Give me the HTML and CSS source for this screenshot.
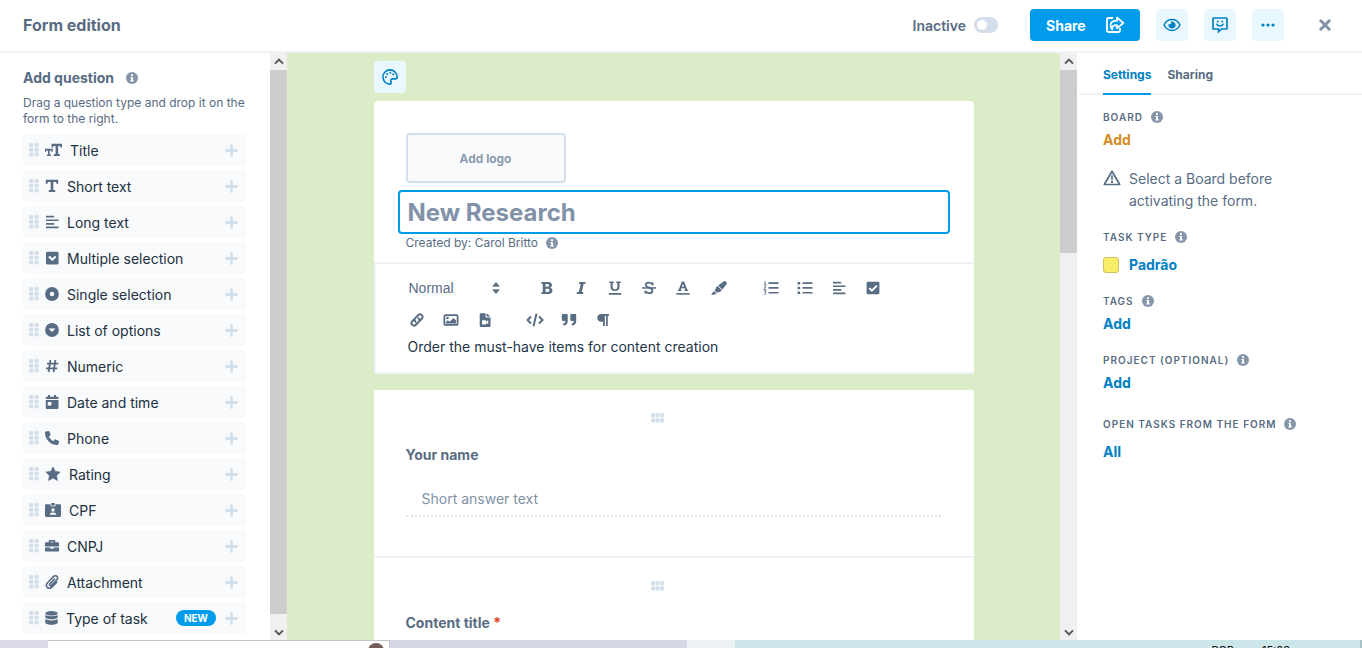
FILE: index.html
```html
<!DOCTYPE html>
<html lang="en">
<head>
    <meta charset="UTF-8">
    <meta name="viewport" content="width=device-width, initial-scale=1.0">
    <title>Form edition</title>
    <link rel="stylesheet" href="styles.css">
</head>
<body>
    <svg class="sprite" aria-hidden="true">
        <symbol id="info" viewBox="0 0 12 12">
            <circle cx="6" cy="6" r="6"/>
            <path fill="#fff" d="M5 2.2h2v1.8H5zM4.4 4.9H7v3.4h.8v1.2H4.3V8.3h.8V6.1h-.7z"/>
        </symbol>
        <symbol id="drag" viewBox="0 0 10 14">
            <rect x="0" y="0" width="4.4" height="4" rx="1.4"/><rect x="5.4" y="0" width="4.4" height="4" rx="1.4"/>
            <rect x="0" y="4.7" width="4.4" height="4" rx="1.4"/><rect x="5.4" y="4.7" width="4.4" height="4" rx="1.4"/>
            <rect x="0" y="9.4" width="4.4" height="4" rx="1.4"/><rect x="5.4" y="9.4" width="4.4" height="4" rx="1.4"/>
        </symbol>
        <symbol id="drag-wide" viewBox="0 0 13 10">
            <rect x="0" y="0" width="4" height="4.4" rx="1.4"/><rect x="4.5" y="0" width="4" height="4.4" rx="1.4"/><rect x="9" y="0" width="4" height="4.4" rx="1.4"/>
            <rect x="0" y="5.2" width="4" height="4.4" rx="1.4"/><rect x="4.5" y="5.2" width="4" height="4.4" rx="1.4"/><rect x="9" y="5.2" width="4" height="4.4" rx="1.4"/>
        </symbol>
        <symbol id="plus" viewBox="0 0 13 13">
            <path d="M6.5 1.4v10.2M1.4 6.5h10.2" stroke="currentColor" stroke-width="2.8" stroke-linecap="round"/>
        </symbol>
        <symbol id="title" viewBox="0 0 18 14">
            <path d="M7 .5h11v3.8h-1.7l-.3-1.6h-2.1v8.6h1.7v2H9.4v-2h1.8V2.700H9l-.3 1.600H7z"/>
            <path d="M0 5.600h8.200v3.200H6.800l-.3-1.300H5v4.300h1.200v1.500H2v-1.500h1.200V7.500H1.700l-.3 1.300H0z"/>
        </symbol>
        <symbol id="text" viewBox="0 0 14 14">
            <path d="M.8.8h12.4v4h-1.8l-.3-1.9H8.300v8.200h1.900v2H3.800v-2h1.900V2.900H2.900l-.3 1.900H.8z"/>
        </symbol>
        <symbol id="lines" viewBox="0 0 14 14">
            <path d="M1 .8h8.200v1.700H1zM1 4.400h12.500v1.700H1zM1 8h8.200v1.700H1zM1 11.600h12.500v1.700H1z"/>
        </symbol>
        <symbol id="multiple" viewBox="0 0 14 14">
            <rect x="1" y=".8" width="12.6" height="12.6" rx="1.4"/>
            <path d="M4 5.500l3.300 3.200 3.300-3.200" fill="none" stroke="#fff" stroke-width="2"/>
        </symbol>
        <symbol id="single" viewBox="0 0 14 14">
            <circle cx="7" cy="7" r="6.9"/><circle cx="7" cy="7" r="2.2" fill="#fff"/>
        </symbol>
        <symbol id="options" viewBox="0 0 14 14">
            <circle cx="7" cy="7" r="6.9"/><path fill="#fff" d="M3.600 5.500h6.800L7 9.100z"/>
        </symbol>
        <symbol id="hash" viewBox="0 0 14 14">
            <path d="M5.400 1L3.600 13M10.400 1L8.600 13M2 4.600h11.200M1 9.400h11.200" fill="none" stroke="currentColor" stroke-width="1.8"/>
        </symbol>
        <symbol id="calendar" viewBox="0 0 14 14">
            <path d="M3 0h2v1.800h4V0h2v1.800h1.200c.8 0 1.300.5 1.300 1.300v1H.8v-1c0-.8.5-1.300 1.300-1.300H3z"/>
            <path d="M.8 5.100h12.700v7.600c0 .8-.5 1.300-1.300 1.300H2.100c-.8 0-1.300-.5-1.300-1.300z"/>
            <rect x="2.7" y="6.9" width="3.7" height="3.6" rx=".4" fill="#fff"/>
        </symbol>
        <symbol id="phone" viewBox="0 0 14 14">
            <path d="M.7.6L3.500 0c.3-.1.6.1.8.4l1.300 3c.1.3 0 .6-.2.8L3.800 5.500c.9 2 2.600 3.700 4.700 4.700l1.300-1.600c.2-.3.5-.3.8-.2l3 1.300c.3.100.5.400.4.800l-.6 2.800c-.1.400-.4.700-.8.700C5.600 14 0 8.500 0 1.400c0-.4.300-.7.700-.8z"/>
        </symbol>
        <symbol id="star" viewBox="0 0 16 14">
            <path d="M8 0l2.200 4.400 4.900.7-3.500 3.400.8 4.900L8 11.100l-4.400 2.300.8-4.900L.9 5.100l4.900-.7z" stroke="currentColor" stroke-width=".7" stroke-linejoin="round"/>
        </symbol>
        <symbol id="badge" viewBox="0 0 16 14">
            <path d="M1.200 1.300H5.500V3.300h5V1.300h4.300c.7 0 1.200.5 1.200 1.200v10.300c0 .7-.5 1.200-1.200 1.200H1.200C.5 14 0 13.500 0 12.800V2.500c0-.7.5-1.200 1.200-1.200z"/>
            <rect x="6.2" y="0" width="3.6" height="2.6" rx=".5"/>
            <circle cx="8" cy="7" r="1.7" fill="#fff"/><path fill="#fff" d="M4.900 11.800c0-1.700 1-2.400 3.100-2.400s3.100.7 3.100 2.400z"/>
        </symbol>
        <symbol id="briefcase" viewBox="0 0 15 14">
            <path fill-rule="evenodd" d="M4 3V1.700C4 1 4.500.5 5.200.5h4.600c.7 0 1.200.5 1.200 1.200V3h2.700c.7 0 1.300.6 1.300 1.300v3.300H0V4.300C0 3.600.6 3 1.300 3zm1.700 0h3.600V2.100H5.700z"/>
            <path d="M0 8.500h5.700v1.400h3.600V8.500H15v3.200c0 .7-.6 1.300-1.300 1.300H1.300C.6 13 0 12.400 0 11.700z"/>
        </symbol>
        <symbol id="clip" viewBox="0 0 14 14">
            <path d="M9.500 4L4.900 8.900c-1 1.100.5 2.600 1.600 1.500l5.300-5.600c2.200-2.500-1-5.500-3.400-3.200L2.500 7.700c-3.200 3.500 1.300 7.500 4.400 4.400l4.800-5" fill="none" stroke="currentColor" stroke-width="1.6" stroke-linecap="round"/>
        </symbol>
        <symbol id="database" viewBox="0 0 13 14">
            <ellipse cx="6.5" cy="2.3" rx="6.2" ry="2.3"/>
            <path d="M.3 4.100c2.400 1.600 10 1.600 12.400 0v2.300c-1.200 2.400-11.200 2.400-12.400 0z"/>
            <path d="M.3 8.100c2.400 1.700 10 1.700 12.400 0v3.600c-1.200 2.800-11.200 2.800-12.400 0z"/>
        </symbol>
        <symbol id="share" viewBox="0 0 20 18">
            <path d="M8 2H3.500C2.400 2 2 2.500 2 3.500v11c0 1 .5 1.500 1.500 1.500h10c1 0 1.500-.5 1.500-1.500V12" fill="none" stroke="currentColor" stroke-width="1.8"/>
            <path d="M12 1.500L18.300 7 12 12.300V9.200c-4 0-4.900 1-4.800 4.300C3.800 8.300 6 4.800 12 4.700z" fill="none" stroke="currentColor" stroke-width="1.7" stroke-linejoin="round"/>
        </symbol>
        <symbol id="eye" viewBox="0 0 18 14">
            <path d="M1 7c3.500-7.200 12.500-7.200 16 0-3.500 7.200-12.500 7.200-16 0z" fill="none" stroke="currentColor" stroke-width="1.5"/>
            <path d="M9 3.400c2.100 0 3.600 1.600 3.600 3.600S11.100 10.600 9 10.600 5.400 9 5.400 7c0-.4.1-.8.200-1.100 1.200 1 3.100.2 2.500-1.400-.1-.4-.3-.6-.4-.8.4-.2.800-.3 1.300-.3z"/>
        </symbol>
        <symbol id="comment" viewBox="0 0 16 16">
            <path d="M1.800 1h12.400c.5 0 .8.300.8.800v9.400c0 .5-.3.800-.8.800H9.500l-3 2.800V12H1.800c-.5 0-.8-.3-.8-.8V1.800c0-.5.3-.8.800-.8z" fill="none" stroke="currentColor" stroke-width="1.7"/>
            <path d="M4.800 7.200c1.400 2.400 5 2.400 6.400 0" fill="none" stroke="currentColor" stroke-width="1.5" stroke-linecap="round"/>
            <circle cx="5.8" cy="4.600" r="1"/><circle cx="10.2" cy="4.600" r="1"/>
        </symbol>
        <symbol id="dots" viewBox="0 0 14 4">
            <circle cx="2" cy="2" r="1.6"/><circle cx="7" cy="2" r="1.6"/><circle cx="12" cy="2" r="1.6"/>
        </symbol>
        <symbol id="close" viewBox="0 0 12 12">
            <path d="M1.800 1.800l8.400 8.400M10.200 1.800l-8.400 8.400" stroke="currentColor" stroke-width="3" stroke-linecap="round"/>
        </symbol>
        <symbol id="palette" viewBox="0 0 16 16">
            <path d="M8 .9C4.100.9.9 4.100.9 8c0 3.800 3 7.100 6.800 7.100 1.400 0 1.900-1.200 1.300-2.500-.7-1.600.2-2.700 1.800-2.700h2.500c1.200 0 1.800-.7 1.800-1.900C15.100 4 12 .9 8 .9z" fill="none" stroke="currentColor" stroke-width="1.6"/>
            <circle cx="4" cy="8" r="1"/><circle cx="5.2" cy="4.900" r="1"/><circle cx="8.3" cy="3.800" r="1"/><circle cx="11.3" cy="5.200" r="1"/>
        </symbol>
        <symbol id="up" viewBox="0 0 10 7">
            <path d="M1 5.600l4-4 4 4" fill="none" stroke="currentColor" stroke-width="2"/>
        </symbol>
        <symbol id="down" viewBox="0 0 10 7">
            <path d="M1 1.400l4 4 4-4" fill="none" stroke="currentColor" stroke-width="2"/>
        </symbol>
        <symbol id="sort" viewBox="0 0 8 12">
            <path d="M4 .6l3.300 3.600H.7zM4 11.400L.7 7.800h6.600z" stroke="currentColor" stroke-width=".8" stroke-linejoin="round"/>
        </symbol>
        <symbol id="bold" viewBox="0 0 14 14">
            <path fill-rule="evenodd" d="M1.500 1h6.800c2.300 0 3.600 1.100 3.600 3 0 1.300-.6 2.200-1.700 2.700 1.500.4 2.200 1.400 2.200 2.800 0 2.300-1.500 3.500-4 3.500H1.500v-2h1.300V3H1.500zM5.500 3v2.800h2c1 0 1.600-.5 1.600-1.400S8.500 3 7.500 3zm0 4.700V11h2.300c1.100 0 1.700-.6 1.700-1.700 0-1-.6-1.600-1.700-1.600z"/>
        </symbol>
        <symbol id="italic" viewBox="0 0 14 14">
            <path d="M5.300 1h6.300l-.3 1.900H9.600L7.700 11.100h1.700L9 13H2.600L3 11.100h1.800L6.700 2.900H5z"/>
        </symbol>
        <symbol id="underline" viewBox="0 0 14 14">
            <path d="M1.200.4h4.600V2H4.700v4c0 1.600.8 2.300 2.300 2.300S9.300 7.600 9.300 6V2H8.200V.4h4.600V2h-1.300v4.100C11.500 8.700 9.800 10.100 7 10.100S2.500 8.700 2.500 6.100V2H1.200zM.8 12.100h12.400v1.600H.8z"/>
        </symbol>
        <symbol id="strike" viewBox="0 0 14 14">
            <path d="M10.600 4.200V1.400M10.600 3.600C9 .6 3.700 1 3.800 4c.1 1.600 1.700 2.200 3.300 2.700s3.400 1.100 3.300 2.900c-.1 3.300-5.500 3.300-7 .4M3.400 9.700v2.800" fill="none" stroke="currentColor" stroke-width="1.8"/>
            <path d="M0 6.200h14v1.500H0z"/>
        </symbol>
        <symbol id="color" viewBox="0 0 14 14">
            <path fill-rule="evenodd" d="M5.900.4h2.200l3.200 8.300h.8v1.400H8.500V8.700h.7l-.5-1.500H5.300l-.5 1.500h.7v1.400H1.900V8.700h.8zM7 2.700L5.900 5.700h2.200z"/>
            <path d="M.3 12.100h13.400v1.600H.3z"/>
        </symbol>
        <symbol id="marker" viewBox="0 0 16 14">
            <path d="M12.600.4c.8-.5 1.400-.5 2 .1l.9.900c.5.600.5 1.200.1 1.900l-4.300 5.200-4.100-4zM6.600 5.100l4.100 4-1.100 1.300c-.6.600-1.300.7-2 .5L6.300 12l-2.900-2.800 1.300-1.200c-.2-.7 0-1.300.5-1.800zM2.800 9.900l2.700 2.700-1.100 1-.8-.8-.5.900H0z"/>
        </symbol>
        <symbol id="ol" viewBox="0 0 16 14">
            <path d="M5.500 1.300h10v1.700h-10zM5.500 6.100h10v1.700h-10zM5.500 10.900h10v1.700h-10z"/>
            <path d="M1 1h1.200v3M.8 4h2.800M.9 5.900h2L.9 8.600h2.500M.8 10h2.300l-1 1.400c1.800.2 1.200 2.100-1.300 1.700" fill="none" stroke="currentColor" stroke-width=".9"/>
        </symbol>
        <symbol id="ul" viewBox="0 0 16 14">
            <path d="M5.500 1.300h10v1.700h-10zM5.500 6.100h10v1.700h-10zM5.500 10.900h10v1.700h-10zM.6 1h2.600v2.400H.6zM.6 5.800h2.600v2.400H.6zM.6 10.600h2.600v2.400H.6z"/>
        </symbol>
        <symbol id="check" viewBox="0 0 14 14">
            <rect x=".6" y=".7" width="12.8" height="12.6" rx="1.4"/>
            <path d="M3.300 7.100l2.600 2.600 5-5" fill="none" stroke="#fff" stroke-width="1.9"/>
        </symbol>
        <symbol id="link" viewBox="0 0 14 14">
            <path d="M5.600 8.700C4.300 7.400 4.400 5.900 5.400 4.900l2.700-2.700c2.400-2.300 6 .9 3.700 3.500l-1.500 1.500M8.400 5.300c1.300 1.300 1.200 2.800.2 3.800l-2.700 2.700c-2.400 2.300-6-.9-3.700-3.500l1.500-1.500" fill="none" stroke="currentColor" stroke-width="2" stroke-linecap="round"/>
        </symbol>
        <symbol id="image" viewBox="0 0 16 14">
            <rect x="1.4" y="2.1" width="13.2" height="9.8" rx="1" fill="none" stroke="currentColor" stroke-width="1.8"/>
            <circle cx="4.5" cy="5" r="1.3"/><path d="M3 10.400V9l1.900-1.800 1.600 1.500L10.500 5l2.600 2.500v2.900z"/>
        </symbol>
        <symbol id="file" viewBox="0 0 14 14">
            <path fill-rule="evenodd" d="M2.500.2h5v3.500c0 .4.300.7.700.7H12.500v8.700c0 .5-.3.800-.8.800H2.500c-.5 0-.8-.3-.8-.8V1c0-.5.3-.8.8-.8zM4 7.200v4.200h4V10l2.200 1.300V7.200L8 8.500V7.200z"/>
            <path d="M8.500.2l4 3.300h-4z"/>
        </symbol>
        <symbol id="code" viewBox="0 0 18 14">
            <path d="M5 3.500L1.500 7 5 10.500M13 3.500L16.500 7 13 10.500M10.500.8l-3 12.400" fill="none" stroke="currentColor" stroke-width="2"/>
        </symbol>
        <symbol id="quote" viewBox="0 0 16 14">
            <path d="M2 1h3.500c.8 0 1.200.5 1.200 1.200v6c0 2.700-1.400 4.100-4.400 4.300v-2c1.500-.1 2-.8 2-2.500H2C1.200 8 .8 7.500.8 6.800V2.200C.8 1.500 1.200 1 2 1zM10.500 1H14c.8 0 1.200.5 1.200 1.200v6c0 2.700-1.400 4.100-4.400 4.300v-2c1.500-.1 2-.8 2-2.500h-2.300c-.8 0-1.200-.5-1.200-1.200V2.200c0-.7.4-1.200 1.200-1.200z"/>
        </symbol>
        <symbol id="paragraph" viewBox="0 0 14 14">
            <path d="M5.500 1H13v1.700h-1.200V13h-1.700V2.700H8.800V13H7V8.800H5.500C3 8.800 1.300 7.200 1.300 4.900S3 1 5.500 1z"/>
        </symbol>
        <symbol id="warning" viewBox="0 0 18 16">
            <path d="M9 1.300l7.700 13.200H1.300z" fill="none" stroke="currentColor" stroke-width="1.7" stroke-linejoin="round"/>
            <path d="M8 5.600h2l-.3 4.300H8.300z"/><circle cx="9" cy="11.900" r="1.2"/>
        </symbol>
    </svg>

    <header class="topbar">
        <h1>Form edition</h1>
        <div class="topbar-actions">
            <label class="status">Inactive <input type="checkbox" class="toggle"></label>
            <button class="share">Share <svg width="20" height="18"><use href="#share"/></svg></button>
            <button class="icon-button" aria-label="Preview"><svg width="18" height="14"><use href="#eye"/></svg></button>
            <button class="icon-button" aria-label="Feedback"><svg width="16" height="16"><use href="#comment"/></svg></button>
            <button class="icon-button" aria-label="More"><svg width="14" height="4"><use href="#dots"/></svg></button>
            <button class="close" aria-label="Close"><svg width="12" height="12"><use href="#close"/></svg></button>
        </div>
    </header>

    <main class="workspace">
        <aside class="questions">
            <h2>Add question <svg class="info" width="12" height="12"><use href="#info"/></svg></h2>
            <p>Drag a question type and drop it on the form to the right.</p>
            <div class="question-types">
                <button class="type"><svg class="grip" width="10" height="14"><use href="#drag"/></svg><svg width="17" height="14"><use href="#title"/></svg><span>Title</span><svg class="plus" width="13" height="13"><use href="#plus"/></svg></button>
                <button class="type"><svg class="grip" width="10" height="14"><use href="#drag"/></svg><svg width="14" height="14"><use href="#text"/></svg><span>Short text</span><svg class="plus" width="13" height="13"><use href="#plus"/></svg></button>
                <button class="type"><svg class="grip" width="10" height="14"><use href="#drag"/></svg><svg width="14" height="14"><use href="#lines"/></svg><span>Long text</span><svg class="plus" width="13" height="13"><use href="#plus"/></svg></button>
                <button class="type"><svg class="grip" width="10" height="14"><use href="#drag"/></svg><svg width="14" height="14"><use href="#multiple"/></svg><span>Multiple selection</span><svg class="plus" width="13" height="13"><use href="#plus"/></svg></button>
                <button class="type"><svg class="grip" width="10" height="14"><use href="#drag"/></svg><svg width="14" height="14"><use href="#single"/></svg><span>Single selection</span><svg class="plus" width="13" height="13"><use href="#plus"/></svg></button>
                <button class="type"><svg class="grip" width="10" height="14"><use href="#drag"/></svg><svg width="14" height="14"><use href="#options"/></svg><span>List of options</span><svg class="plus" width="13" height="13"><use href="#plus"/></svg></button>
                <button class="type"><svg class="grip" width="10" height="14"><use href="#drag"/></svg><svg width="14" height="14"><use href="#hash"/></svg><span>Numeric</span><svg class="plus" width="13" height="13"><use href="#plus"/></svg></button>
                <button class="type"><svg class="grip" width="10" height="14"><use href="#drag"/></svg><svg width="14" height="14"><use href="#calendar"/></svg><span>Date and time</span><svg class="plus" width="13" height="13"><use href="#plus"/></svg></button>
                <button class="type"><svg class="grip" width="10" height="14"><use href="#drag"/></svg><svg width="14" height="14"><use href="#phone"/></svg><span>Phone</span><svg class="plus" width="13" height="13"><use href="#plus"/></svg></button>
                <button class="type"><svg class="grip" width="10" height="14"><use href="#drag"/></svg><svg width="16" height="14"><use href="#star"/></svg><span>Rating</span><svg class="plus" width="13" height="13"><use href="#plus"/></svg></button>
                <button class="type"><svg class="grip" width="10" height="14"><use href="#drag"/></svg><svg width="16" height="14"><use href="#badge"/></svg><span>CPF</span><svg class="plus" width="13" height="13"><use href="#plus"/></svg></button>
                <button class="type"><svg class="grip" width="10" height="14"><use href="#drag"/></svg><svg width="14" height="14"><use href="#briefcase"/></svg><span>CNPJ</span><svg class="plus" width="13" height="13"><use href="#plus"/></svg></button>
                <button class="type"><svg class="grip" width="10" height="14"><use href="#drag"/></svg><svg width="14" height="14"><use href="#clip"/></svg><span>Attachment</span><svg class="plus" width="13" height="13"><use href="#plus"/></svg></button>
                <button class="type"><svg class="grip" width="10" height="14"><use href="#drag"/></svg><svg width="13" height="14"><use href="#database"/></svg><span>Type of task</span><b class="new">NEW</b><svg class="plus" width="13" height="13"><use href="#plus"/></svg></button>
            </div>
        </aside>
        <div class="scrollbar">
            <svg width="10" height="7"><use href="#up"/></svg>
            <div class="track"><div class="thumb thumb-long"></div></div>
            <svg width="10" height="7"><use href="#down"/></svg>
        </div>

        <section class="canvas">
            <div class="form">
                <button class="icon-button" aria-label="Theme"><svg width="16" height="16"><use href="#palette"/></svg></button>
                <div class="card intro">
                    <div class="intro-head">
                        <button class="logo">Add logo</button>
                        <input type="text" class="form-title" value="New Research" aria-label="Form title">
                        <p class="author">Created by: Carol Britto <svg class="info" width="12" height="12"><use href="#info"/></svg></p>
                    </div>
                    <div class="editor">
                        <div class="toolbar">
                            <label class="format">
                                <select aria-label="Text style"><option>Normal</option></select>
                                <svg width="8" height="12"><use href="#sort"/></svg>
                            </label>
                            <div class="tools">
                                <button aria-label="Bold"><svg width="14" height="14"><use href="#bold"/></svg></button>
                                <button aria-label="Italic"><svg width="14" height="14"><use href="#italic"/></svg></button>
                                <button aria-label="Underline"><svg width="14" height="14"><use href="#underline"/></svg></button>
                                <button aria-label="Strikethrough"><svg width="14" height="14"><use href="#strike"/></svg></button>
                                <button aria-label="Text color"><svg width="14" height="14"><use href="#color"/></svg></button>
                                <button class="wide" aria-label="Highlight"><svg width="16" height="14"><use href="#marker"/></svg></button>
                            </div>
                            <div class="tools">
                                <button aria-label="Numbered list"><svg width="16" height="14"><use href="#ol"/></svg></button>
                                <button aria-label="Bulleted list"><svg width="16" height="14"><use href="#ul"/></svg></button>
                                <button aria-label="Align left"><svg width="14" height="14"><use href="#lines"/></svg></button>
                                <button aria-label="Checklist"><svg width="14" height="14"><use href="#check"/></svg></button>
                            </div>
                            <div class="tools">
                                <button aria-label="Link"><svg width="14" height="14"><use href="#link"/></svg></button>
                                <button aria-label="Image"><svg width="16" height="14"><use href="#image"/></svg></button>
                                <button aria-label="Video"><svg width="14" height="14"><use href="#file"/></svg></button>
                            </div>
                            <div class="tools">
                                <button aria-label="Code"><svg width="18" height="14"><use href="#code"/></svg></button>
                                <button aria-label="Quote"><svg width="16" height="14"><use href="#quote"/></svg></button>
                                <button aria-label="Paragraph"><svg width="14" height="14"><use href="#paragraph"/></svg></button>
                            </div>
                        </div>
                        <textarea class="description" rows="1" aria-label="Description">Order the must-have items for content creation</textarea>
                    </div>
                </div>
                <div class="card">
                    <div class="question">
                        <svg class="handle" width="13" height="10"><use href="#drag-wide"/></svg>
                        <label for="name">Your name</label>
                        <input type="text" id="name" class="answer" placeholder="Short answer text">
                    </div>
                    <div class="question">
                        <svg class="handle" width="13" height="10"><use href="#drag-wide"/></svg>
                        <label for="content">Content title <span class="required">*</span></label>
                        <input type="text" id="content" class="answer" placeholder="Short answer text">
                    </div>
                </div>
            </div>
        </section>
        <div class="scrollbar">
            <svg width="10" height="7"><use href="#up"/></svg>
            <div class="track"><div class="thumb"></div></div>
            <svg width="10" height="7"><use href="#down"/></svg>
        </div>

        <aside class="settings">
            <nav class="tabs">
                <a href="#settings" class="active">Settings</a>
                <a href="#sharing">Sharing</a>
            </nav>
            <div class="fields" id="settings">
                <h3>BOARD <svg class="info" width="12" height="12"><use href="#info"/></svg></h3>
                <a href="#board" class="value missing">Add</a>
                <p class="notice"><svg width="18" height="16"><use href="#warning"/></svg>Select a Board before activating the form.</p>
                <h3>TASK TYPE <svg class="info" width="12" height="12"><use href="#info"/></svg></h3>
                <a href="#type" class="value spaced"><span class="swatch"></span>Padrão</a>
                <h3>TAGS <svg class="info" width="12" height="12"><use href="#info"/></svg></h3>
                <a href="#tags" class="value">Add</a>
                <h3>PROJECT (OPTIONAL) <svg class="info" width="12" height="12"><use href="#info"/></svg></h3>
                <a href="#project" class="value last">Add</a>
                <h3>OPEN TASKS FROM THE FORM <svg class="info" width="12" height="12"><use href="#info"/></svg></h3>
                <a href="#open" class="value spaced">All</a>
            </div>
        </aside>
    </main>

    <footer class="taskbar">
        <div class="edge"></div>
        <div class="window"><span class="avatar"></span></div>
        <div class="desk"></div>
        <div class="pale"></div>
        <div class="tray"><span>POR</span><span>15:03</span></div>
    </footer>
</body>
</html>
```
FILE: styles.css
```css
* {
    box-sizing: border-box;
}
body {
    margin: 0;
    height: 100vh;
    display: flex;
    flex-direction: column;
    overflow: hidden;
    font-family: Inter, "Liberation Sans", sans-serif;
    font-size: 14px;
    color: #586c83;
    background: #fff;
}
h1, h2, h3, p {
    margin: 0;
}
button, input, select, textarea {
    font-family: inherit;
    color: inherit;
    margin: 0;
    padding: 0;
    border: none;
    background: none;
}
button {
    cursor: pointer;
}
a {
    text-decoration: none;
}
svg {
    fill: currentColor;
    flex: none;
}
.sprite {
    display: none;
}
.info {
    color: #8595aa;
}

/* top bar */
.topbar {
    display: flex;
    align-items: center;
    justify-content: space-between;
    height: 53px;
    flex: none;
    padding: 0 31px 1px 23px;
    border-bottom: 2px solid #eff3f8;
}
.topbar h1 {
    font-size: 16px;
    font-weight: 700;
}
.topbar-actions {
    display: flex;
    align-items: center;
    gap: 16px;
}
.status {
    display: flex;
    align-items: center;
    gap: 8px;
    margin-right: 16px;
    font-weight: 600;
}
.toggle {
    appearance: none;
    display: flex;
    align-items: center;
    width: 24px;
    height: 16px;
    padding: 0 3px;
    border-radius: 8px;
    background: #d2deea;
}
.toggle::before {
    content: "";
    width: 10px;
    height: 10px;
    border-radius: 5px;
    background: #fff;
}
.share {
    display: flex;
    align-items: center;
    justify-content: space-between;
    width: 110px;
    height: 32px;
    padding: 0 15px 0 16px;
    border-radius: 4px;
    font-size: 14px;
    font-weight: 700;
    color: #fff;
    background: #009ceb;
}
.icon-button {
    display: flex;
    align-items: center;
    justify-content: center;
    width: 32px;
    height: 32px;
    border-radius: 4px;
    color: #0080c3;
    background: #e9f7ff;
}
.close {
    display: flex;
    margin-left: 19px;
    color: #8292a8;
}

.workspace {
    display: flex;
    flex: 1;
    min-height: 0;
}

/* question types */
.questions {
    width: 270px;
    flex: none;
    padding: 16px 24px 0 23px;
    overflow: hidden;
}
.questions h2 {
    display: flex;
    align-items: center;
    gap: 12px;
    font-size: 14px;
    line-height: 18px;
    font-weight: 700;
}
.questions p {
    margin: 8px 0 7px;
    font-size: 12px;
    line-height: 16px;
}
.question-types {
    display: flex;
    flex-direction: column;
    gap: 4px;
}
.type {
    display: flex;
    align-items: center;
    height: 32px;
    padding: 0 8px 0 6px;
    border-radius: 4px;
    font-size: 14px;
    background: #f8fafc;
}
.type span {
    margin: 0 auto 0 8px;
    color: #22303f;
}
.grip {
    margin-right: 6px;
    color: #d3dfeb;
}
.plus {
    color: #d3dfeb;
}
.new {
    margin-right: 9px;
    padding: 0 8px;
    border-radius: 8px;
    font-size: 10px;
    line-height: 16px;
    color: #fff;
    background: #009ceb;
}

.scrollbar {
    display: flex;
    flex-direction: column;
    align-items: center;
    width: 17px;
    flex: none;
    padding: 5px 0 4px;
    color: #555;
    background: #f0f0f0;
}
.track {
    flex: 1;
    align-self: stretch;
    padding: 5px 0 10px;
}
.thumb {
    height: calc(100% / 3);
    background: #cdcdcd;
}
.thumb-long {
    height: 99%;
}

/* form */
.canvas {
    flex: 1;
    min-width: 0;
    padding: 8px;
    overflow: hidden;
    background: #ddecc8;
}
.form {
    display: flex;
    flex-direction: column;
    max-width: 600px;
    margin: 0 auto;
}
.card {
    margin-bottom: 16px;
    background: #fff;
}
.intro {
    margin-top: 8px;
    border-radius: 4px 4px 0 0;
}
.intro-head {
    padding: 32px 24px 11px;
}
.logo {
    display: block;
    width: 160px;
    height: 50px;
    margin: 0 8px 7px;
    border: 2px solid #d3dfeb;
    border-radius: 4px;
    font-size: 12px;
    font-weight: 600;
    color: #8292a8;
    background: #f8fafc;
}
.form-title {
    display: block;
    width: 100%;
    height: 44px;
    padding: 0 8px;
    border: 2px solid #009ceb;
    border-radius: 4px;
    font-size: 24px;
    font-weight: 700;
    color: #8292a8;
}
.author {
    display: flex;
    align-items: center;
    gap: 8px;
    margin: 1px 8px 0;
    font-size: 12px;
    line-height: 16px;
}
.editor {
    padding: 8px 24px 14px;
    border: 2px solid #eff3f8;
    border-right: none;
}
.toolbar {
    display: flex;
    flex-wrap: wrap;
    column-gap: 16px;
}
.format {
    display: flex;
    align-items: center;
    width: 114px;
    height: 32px;
    padding: 0 14px 0 9px;
}
.format select {
    appearance: none;
    flex: 1;
    font-family: "Liberation Sans", Arial, sans-serif;
    font-size: 14px;
}
.tools {
    display: flex;
}
.tools button {
    display: flex;
    align-items: center;
    justify-content: center;
    width: 34px;
    height: 32px;
}
.tools .wide {
    width: 38px;
}
.description {
    display: block;
    width: 100%;
    height: 22px;
    padding: 0 8px;
    font-size: 14px;
    line-height: 22px;
    color: #1d3549;
    resize: none;
    overflow: hidden;
}
.question {
    display: flex;
    flex-direction: column;
    padding: 23px 33px 39px 0;
    border-bottom: 2px solid #eff3f8;
}
.question label {
    margin: 23px 0 17px 32px;
    line-height: 18px;
    font-weight: 700;
}
.handle {
    align-self: center;
    color: #d3dfeb;
}
.answer {
    height: 36px;
    margin-left: 32px;
    padding: 0 16px;
    border-bottom: 2px dotted #dfe6ef;
    font-size: 14px;
}
.answer::placeholder {
    color: #8292a8;
}
.required {
    color: #e0401f;
}

/* settings */
.settings {
    width: 285px;
    flex: none;
    padding-left: 2px;
}
.tabs {
    display: flex;
    gap: 16px;
    height: 42px;
    padding-left: 24px;
    border-bottom: 2px solid #eff3f8;
    font-size: 12px;
    font-weight: 700;
    line-height: 44px;
}
.tabs a {
    height: 42px;
    color: inherit;
}
.tabs .active {
    color: #0080c3;
    border-bottom: 2px solid #009ceb;
}
.fields {
    padding: 14px 24px;
}
.fields h3 {
    display: flex;
    align-items: center;
    gap: 8px;
    font-size: 10px;
    line-height: 16px;
    font-weight: 600;
    letter-spacing: 1px;
}
.value {
    display: flex;
    align-items: center;
    gap: 10px;
    margin: 5px 0 18px;
    font-weight: 700;
    line-height: 20px;
    color: #0080c3;
}
.value.missing {
    color: #d48d28;
}
.value.spaced {
    margin: 10px 0 18px;
}
.value.last {
    margin-bottom: 23px;
}
.swatch {
    width: 16px;
    height: 16px;
    border: 1px solid #d0c25a;
    border-radius: 3px;
    background: #faed67;
}
.notice {
    display: flex;
    gap: 8px;
    width: 200px;
    margin-bottom: 17px;
    line-height: 22px;
}
.notice svg {
    margin-top: 2px;
}

/* desktop taskbar */
.taskbar {
    display: flex;
    height: 8px;
    flex: none;
    overflow: hidden;
    background: #cce6e9;
}
.edge {
    width: 48px;
    background: #dad9e8;
}
.window {
    display: flex;
    justify-content: flex-end;
    width: 342px;
    padding: 2px 5px 0 0;
    border: solid #c4c4c4;
    border-width: 1px 1px 0 0;
    background: #fff;
}
.avatar {
    width: 16px;
    height: 16px;
    border-radius: 8px;
    background: #755d5a;
}
.desk {
    width: 297px;
    background: #d5d7e6;
}
.pale {
    width: 48px;
    background: #ebf1f5;
}
.tray {
    display: flex;
    flex: 1;
    justify-content: flex-end;
    gap: 28px;
    padding: 3px 70px 0 0;
    border-right: 2px solid #a5c3c6;
    font-size: 11px;
    line-height: 14px;
    color: #111;
}
```
